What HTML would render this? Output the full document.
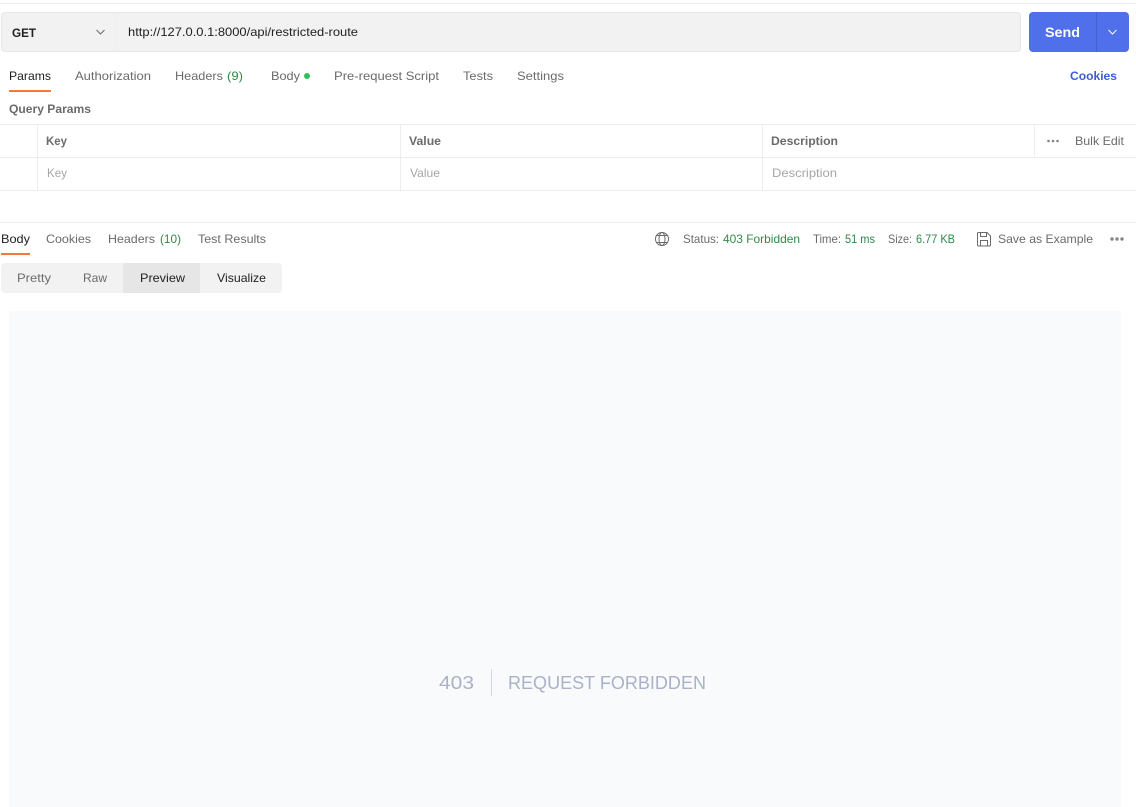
<!DOCTYPE html>
<html>
<head>
<meta charset="utf-8">
<style>
html,body{margin:0;padding:0;background:#fff;width:1136px;height:807px;overflow:hidden}
svg{display:block}
text{font-family:"Liberation Sans",sans-serif;font-size:12px;fill:#6b6b6b}
.b{font-weight:bold}
.d{fill:#212121}
.g{fill:#2f8a49}
.p{fill:#a6a6a6}
.l{stroke:#ededed;stroke-width:1;fill:none}
</style>
</head>
<body>
<svg width="1136" height="807" viewBox="0 0 1136 807" xmlns="http://www.w3.org/2000/svg">
<path class="l" d="M0 3.500H1136"/>
<rect x="1.500" y="12.500" width="1019" height="39" rx="3.500" fill="#f2f2f2" stroke="#e6e6e6"/>
<path class="l" d="M116 13V51"/>
<text class="b d" x="12" y="37" textLength="24" lengthAdjust="spacingAndGlyphs">GET</text>
<path d="M96.500 30L100.500 34L104.500 30" fill="none" stroke="#6b6b6b" stroke-width="1"/>
<text class="d" x="128" y="36" textLength="230" lengthAdjust="spacingAndGlyphs">http://127.0.0.1:8000/api/restricted-route</text>
<rect x="1029" y="12" width="100" height="40" rx="4" fill="#4f70ea"/>
<path d="M1096.500 12V52" stroke="#4560cf" stroke-width="1"/>
<text class="b" style="font-size:14px;fill:#fff" x="1045" y="37" textLength="35" lengthAdjust="spacingAndGlyphs">Send</text>
<path d="M1108.500 30L1112.500 34L1116.500 30" fill="none" stroke="#fff" stroke-width="1"/>

<text class="d" x="9" y="80" textLength="42" lengthAdjust="spacingAndGlyphs">Params</text>
<rect x="9" y="90" width="42" height="2" fill="#f4793f"/>
<text x="75" y="80" textLength="76" lengthAdjust="spacingAndGlyphs">Authorization</text>
<text x="175" y="80" textLength="48" lengthAdjust="spacingAndGlyphs">Headers</text>
<text class="g" x="227" y="80" textLength="16" lengthAdjust="spacingAndGlyphs">(9)</text>
<text x="271" y="80" textLength="29" lengthAdjust="spacingAndGlyphs">Body</text>
<circle cx="307" cy="76" r="3" fill="#2fbf5b"/>
<text x="334" y="80" textLength="105" lengthAdjust="spacingAndGlyphs">Pre-request Script</text>
<text x="463" y="80" textLength="30" lengthAdjust="spacingAndGlyphs">Tests</text>
<text x="517" y="80" textLength="47" lengthAdjust="spacingAndGlyphs">Settings</text>
<text class="b" style="fill:#3f5cd8" x="1070" y="80" textLength="47" lengthAdjust="spacingAndGlyphs">Cookies</text>
<text class="b" x="9" y="113" textLength="82" lengthAdjust="spacingAndGlyphs">Query Params</text>

<path class="l" d="M0 124.500H1136M0 157.500H1136M0 190.500H1136M37.500 124V190M400.500 124V190M762.500 124V190M1034.500 124V157"/>
<text class="b" x="46" y="145" textLength="21" lengthAdjust="spacingAndGlyphs">Key</text>
<text class="b" x="409" y="145" textLength="32" lengthAdjust="spacingAndGlyphs">Value</text>
<text class="b" x="771" y="145" textLength="67" lengthAdjust="spacingAndGlyphs">Description</text>
<circle cx="1048.500" cy="141" r="1.300" fill="#858585"/><circle cx="1053" cy="141" r="1.300" fill="#858585"/><circle cx="1057.500" cy="141" r="1.300" fill="#858585"/>
<text x="1075" y="145" textLength="49" lengthAdjust="spacingAndGlyphs">Bulk Edit</text>
<text class="p" x="47" y="177" textLength="20" lengthAdjust="spacingAndGlyphs">Key</text>
<text class="p" x="410" y="177" textLength="30" lengthAdjust="spacingAndGlyphs">Value</text>
<text class="p" x="772" y="177" textLength="65" lengthAdjust="spacingAndGlyphs">Description</text>

<path class="l" d="M0 222.500H1136"/>
<text class="d" x="1" y="243" textLength="29" lengthAdjust="spacingAndGlyphs">Body</text>
<rect x="1" y="253" width="29" height="2" fill="#f4793f"/>
<text x="46" y="243" textLength="45" lengthAdjust="spacingAndGlyphs">Cookies</text>
<text x="108" y="243" textLength="47" lengthAdjust="spacingAndGlyphs">Headers</text>
<text class="g" x="160" y="243" textLength="21" lengthAdjust="spacingAndGlyphs">(10)</text>
<text x="198" y="243" textLength="68" lengthAdjust="spacingAndGlyphs">Test Results</text>

<g fill="none" stroke="#6b6b6b" stroke-width="1">
<circle cx="662" cy="239" r="6.500"/>
<ellipse cx="662" cy="239" rx="3" ry="6.500"/>
<path d="M656.500 235.500H667.500M656.500 242.500H667.500"/>
</g>
<text x="683" y="243" textLength="36" lengthAdjust="spacingAndGlyphs">Status:</text>
<text class="g" x="723" y="243" textLength="77" lengthAdjust="spacingAndGlyphs">403 Forbidden</text>
<text x="813" y="243" textLength="28" lengthAdjust="spacingAndGlyphs">Time:</text>
<text class="g" x="845" y="243" textLength="30" lengthAdjust="spacingAndGlyphs">51 ms</text>
<text x="888" y="243" textLength="24" lengthAdjust="spacingAndGlyphs">Size:</text>
<text class="g" x="916" y="243" textLength="39" lengthAdjust="spacingAndGlyphs">6.77 KB</text>
<path d="M977.500 233.500a1 1 0 0 1 1-1H987l3.500 3.500V245a1 1 0 0 1-1 1h-11a1 1 0 0 1-1-1ZM980.500 232.500v4h6v-4M980.500 246v-5.500h7V246" fill="none" stroke="#6b6b6b" stroke-width="1"/>
<text x="998" y="243" textLength="95" lengthAdjust="spacingAndGlyphs">Save as Example</text>
<circle cx="1112" cy="239" r="1.700" fill="#858585"/><circle cx="1117" cy="239" r="1.700" fill="#858585"/><circle cx="1122" cy="239" r="1.700" fill="#858585"/>

<rect x="1" y="263" width="281" height="30" rx="4" fill="#f2f2f2"/>
<rect x="123" y="263" width="77" height="30" fill="#e6e6e6"/>
<text x="17" y="282" textLength="34" lengthAdjust="spacingAndGlyphs">Pretty</text>
<text x="83" y="282" textLength="24" lengthAdjust="spacingAndGlyphs">Raw</text>
<text class="d" x="140" y="282" textLength="45" lengthAdjust="spacingAndGlyphs">Preview</text>
<text class="d" x="217" y="282" textLength="49" lengthAdjust="spacingAndGlyphs">Visualize</text>

<rect x="9" y="311" width="1112" height="496" fill="#f9fafc"/>
<text style="font-size:18px;fill:#a9b2c6" x="439" y="689" textLength="35" lengthAdjust="spacingAndGlyphs">403</text>
<path d="M491.500 669V696" stroke="#d3d7e0" stroke-width="1"/>
<text style="font-size:18px;fill:#a9b2c6" x="508" y="689" textLength="198" lengthAdjust="spacingAndGlyphs">REQUEST FORBIDDEN</text>
</svg>
</body>
</html>
